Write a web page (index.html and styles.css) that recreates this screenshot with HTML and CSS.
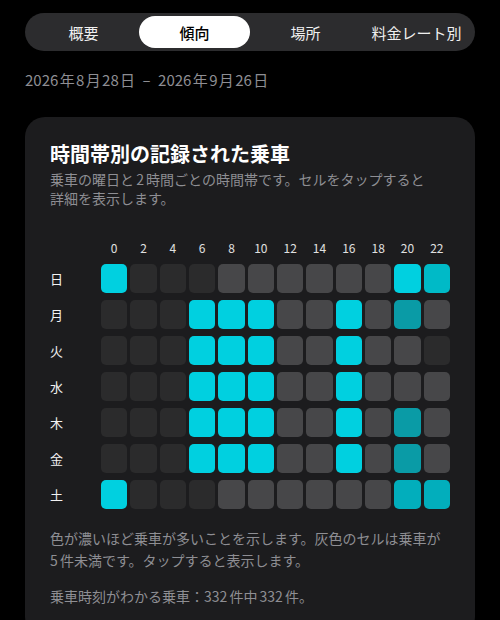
FILE: index.html
```html
<!DOCTYPE html>
<html lang="ja">
<head>
<meta charset="utf-8">
<link rel="stylesheet" href="styles.css">
</head>
<body>
<div class="page">
  <div class="segments">
    <div class="seg">概要</div>
    <div class="seg active">傾向</div>
    <div class="seg">場所</div>
    <div class="seg">料金レート別</div>
  </div>
  <div class="range">2026 年 8 月 28 日&ensp;–&ensp;2026 年 9 月 26 日</div>
  <section class="card">
    <h1 class="title">時間帯別の記録された乗車</h1>
    <p class="sub">乗車の曜日と 2 時間ごとの時間帯です。セルをタップすると<br>詳細を表示します。</p>
    <div class="heat">
      <div class="hl"></div>
      <div class="hr">0</div><div class="hr">2</div><div class="hr">4</div><div class="hr">6</div><div class="hr">8</div><div class="hr">10</div><div class="hr">12</div><div class="hr">14</div><div class="hr">16</div><div class="hr">18</div><div class="hr">20</div><div class="hr">22</div>

      <div class="dl">日</div>
      <div class="cell c"></div><div class="cell d"></div><div class="cell d"></div><div class="cell d"></div><div class="cell g"></div><div class="cell g"></div><div class="cell g"></div><div class="cell g"></div><div class="cell g"></div><div class="cell g"></div><div class="cell c"></div><div class="cell m"></div>

      <div class="dl">月</div>
      <div class="cell d"></div><div class="cell d"></div><div class="cell d"></div><div class="cell c"></div><div class="cell c"></div><div class="cell c"></div><div class="cell g"></div><div class="cell g"></div><div class="cell c"></div><div class="cell g"></div><div class="cell t"></div><div class="cell g"></div>

      <div class="dl">火</div>
      <div class="cell d"></div><div class="cell d"></div><div class="cell d"></div><div class="cell c"></div><div class="cell c"></div><div class="cell c"></div><div class="cell g"></div><div class="cell g"></div><div class="cell c"></div><div class="cell g"></div><div class="cell g"></div><div class="cell d"></div>

      <div class="dl">水</div>
      <div class="cell d"></div><div class="cell d"></div><div class="cell d"></div><div class="cell c"></div><div class="cell c"></div><div class="cell c"></div><div class="cell g"></div><div class="cell g"></div><div class="cell c"></div><div class="cell g"></div><div class="cell g"></div><div class="cell g"></div>

      <div class="dl">木</div>
      <div class="cell d"></div><div class="cell d"></div><div class="cell d"></div><div class="cell c"></div><div class="cell c"></div><div class="cell c"></div><div class="cell g"></div><div class="cell g"></div><div class="cell c"></div><div class="cell g"></div><div class="cell t"></div><div class="cell g"></div>

      <div class="dl">金</div>
      <div class="cell d"></div><div class="cell d"></div><div class="cell d"></div><div class="cell c"></div><div class="cell c"></div><div class="cell c"></div><div class="cell g"></div><div class="cell g"></div><div class="cell c"></div><div class="cell g"></div><div class="cell t"></div><div class="cell g"></div>

      <div class="dl">土</div>
      <div class="cell c"></div><div class="cell d"></div><div class="cell d"></div><div class="cell d"></div><div class="cell g"></div><div class="cell g"></div><div class="cell g"></div><div class="cell g"></div><div class="cell g"></div><div class="cell g"></div><div class="cell m2"></div><div class="cell m2"></div>
    </div>
    <p class="note">色が濃いほど乗車が多いことを示します。灰色のセルは乗車が<br>5 件未満です。タップすると表示します。</p>
    <p class="note count">乗車時刻がわかる乗車：332 件中 332 件。</p>
  </section>
</div>
</body>
</html>
```

FILE: styles.css
```css
html, body {
  margin: 0;
  padding: 0;
  background: #000;
}
body {
  font-family: "Noto Sans CJK JP", "Noto Sans", sans-serif;
  color: #fff;
}
.page {
  padding: 13px 25px 0 25px;
}
.segments {
  display: grid;
  grid-template-columns: repeat(4, 1fr);
  height: 38px;
  padding: 3px;
  box-sizing: border-box;
  background: #2c2c2e;
  border-radius: 19px;
}
.seg {
  display: flex;
  align-items: center;
  justify-content: center;
  font-size: 15px;
  font-weight: 400;
  color: #f0f0f0;
  border-radius: 16px;
  white-space: nowrap;
}
.seg.active {
  background: #fff;
  color: #000;
  font-weight: 500;
}
.range {
  margin-top: 19px;
  font-size: 15px;
  line-height: 20px;
  color: #8e8e93;
  word-spacing: -2px;
}
.card {
  margin-top: 27px;
  background: #1c1c1e;
  border-radius: 20px;
  padding: 23px 25px 30px 25px;
}
.title {
  margin: 0;
  font-size: 20px;
  line-height: 28px;
  font-weight: 700;
  color: #fff;
}
.sub {
  margin: 2px 0 0 0;
  font-size: 14px;
  line-height: 19px;
  color: #8e8e93;
  word-spacing: -1px;
}
.heat {
  margin-top: 30px;
  display: grid;
  grid-template-columns: 48px repeat(12, 1fr);
  grid-template-rows: 19px repeat(7, 29px);
  column-gap: 3px;
  row-gap: 7px;
}
.hr {
  font-size: 12px;
  line-height: 19px;
  text-align: center;
  color: #e0e0e0;
}
.dl {
  font-size: 13px;
  line-height: 29px;
  color: #f2f2f2;
}
.cell {
  border-radius: 5px;
}
.cell.c { background: #00d0e0; }
.cell.m { background: #00bac7; }
.cell.m2 { background: #02aebc; }
.cell.t { background: #0a9ba6; }
.cell.g { background: #474749; }
.cell.d { background: #2b2b2c; }
.note {
  margin: 18px 0 0 0;
  font-size: 14px;
  line-height: 22px;
  color: #8e8e93;
  word-spacing: -1px;
}
.note.count {
  margin-top: 14px;
}
```
